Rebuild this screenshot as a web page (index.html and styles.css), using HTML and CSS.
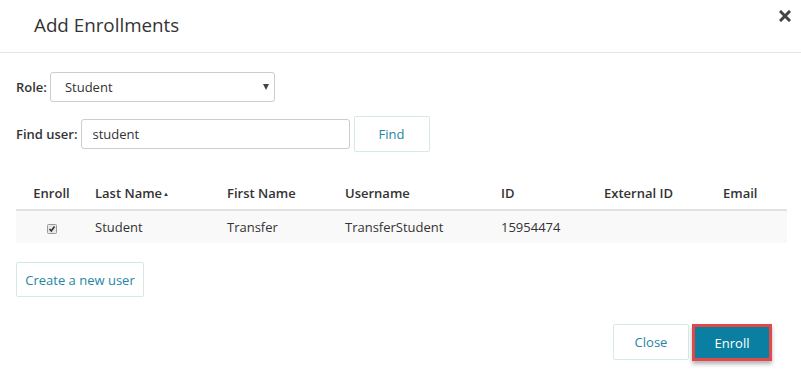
FILE: index.html
```html
<!DOCTYPE html>
<html lang="en">
<head>
  <meta charset="UTF-8">
  <title>Add Enrollments</title>
  <link rel="stylesheet" href="styles.css">
</head>
<body>
  <div class="modal">
    <div class="modal-header">
      <h1>Add Enrollments</h1>
      <button class="close-x" aria-label="Close">
        <svg width="12" height="12" viewBox="0 0 12 12"><path d="M2 2 L10 10 M10 2 L2 10" stroke="#444" stroke-width="3" stroke-linecap="square"/></svg>
      </button>
    </div>

    <div class="modal-body">
      <div class="field">
        <label>Role:</label>
        <div class="select-wrap">
          <select class="role-select">
            <option>Student</option>
          </select>
        </div>
      </div>

      <div class="field">
        <label>Find user:</label>
        <input class="find-input" type="text" value="student">
        <button class="btn find-btn">Find</button>
      </div>

      <table class="users">
        <thead>
          <tr>
            <th class="col-enroll">Enroll</th>
            <th class="col-last">Last Name<span class="sort">&#9650;</span></th>
            <th class="col-first">First Name</th>
            <th class="col-user">Username</th>
            <th class="col-id">ID</th>
            <th class="col-ext">External ID</th>
            <th class="col-email">Email</th>
          </tr>
        </thead>
        <tbody>
          <tr>
            <td class="col-enroll">
              <span class="check">
                <svg width="10" height="10" viewBox="0 0 10 10"><rect x="0.5" y="0.5" width="9" height="9" rx="1" fill="#e8e8e8" stroke="#9a9a9a"/><path d="M2.5 5 L4.3 7 L7.5 2.5" fill="none" stroke="#333" stroke-width="1.6"/></svg>
              </span>
            </td>
            <td>Student</td>
            <td>Transfer</td>
            <td>TransferStudent</td>
            <td>15954474</td>
            <td></td>
            <td></td>
          </tr>
        </tbody>
      </table>

      <button class="btn create-btn">Create a new user</button>
    </div>

    <div class="modal-footer">
      <button class="btn">Close</button>
      <button class="btn btn-primary">Enroll</button>
    </div>
  </div>
</body>
</html>
```

FILE: styles.css
```css
body {
  margin: 0;
  background: #fff;
  font-family: "Open Sans", Arial, sans-serif;
  font-size: 13px;
  color: #333;
}
.modal {
  width: 801px;
  height: 381px;
}
.modal-header {
  height: 52px;
  border-bottom: 1px solid #e5e5e5;
  display: flex;
  justify-content: space-between;
  align-items: flex-start;
  padding: 0 10px 0 34px;
}
.modal-header h1 {
  margin: 12px 0 0;
  font-size: 18.8px;
  font-weight: 400;
  color: #333;
}
.close-x {
  background: none;
  border: none;
  padding: 0;
  margin-top: 10px;
  cursor: pointer;
}
.modal-body {
  padding: 19px 15px 0 16px;
}
.field {
  display: flex;
  align-items: center;
  margin-bottom: 14px;
}
.field label {
  font-weight: 600;
  margin-right: 3px;
}
.select-wrap {
  position: relative;
}
.select-wrap::after {
  content: "";
  position: absolute;
  right: 6px;
  top: 12px;
  border-left: 3px solid transparent;
  border-right: 3px solid transparent;
  border-top: 6px solid #444;
}
.role-select {
  appearance: none;
  width: 225px;
  height: 30px;
  border: 1px solid #ccc;
  border-radius: 3px;
  background: #fff;
  padding: 0 14px;
  font-family: inherit;
  font-size: 13px;
  color: #333;
}
.find-input {
  width: 269px;
  height: 30px;
  box-sizing: border-box;
  border: 1px solid #ccc;
  border-radius: 3px;
  padding: 0 11px;
  font-family: inherit;
  font-size: 13px;
  color: #333;
}
.btn {
  background: #fff;
  border: 1px solid #d3eae8;
  border-radius: 2px;
  color: #2585a6;
  font-family: inherit;
  font-size: 13px;
  height: 36px;
  padding: 0 11px;
  cursor: pointer;
}
.find-btn {
  width: 76px;
  margin-left: 4px;
}
.users {
  width: 771px;
  border-collapse: collapse;
  margin-top: 24px;
}
.users th {
  text-align: left;
  font-weight: 600;
  height: 33px;
  padding: 0 8px;
  border-bottom: 2px solid #e2e2e2;
}
.users td {
  height: 32px;
  padding: 0 8px;
  background: #f9f9f9;
}
.users .col-enroll {
  width: 55px;
  text-align: center;
}
.col-last { width: 116px; }
.col-first { width: 102px; }
.col-user { width: 140px; }
.col-id { width: 87px; }
.col-ext { width: 103px; }
.sort {
  font-size: 6px;
  vertical-align: middle;
  margin-left: 1px;
}
.check {
  display: inline-block;
  vertical-align: middle;
  line-height: 0;
}
.create-btn {
  margin-top: 19px;
  height: 35px;
  width: 128px;
  padding: 0;
}
.modal-footer {
  display: flex;
  justify-content: flex-end;
  gap: 3px;
  padding: 27px 29px 0 0;
}
.modal-footer .btn {
  width: 76px;
}
.modal-footer .btn-primary {
  width: 80px;
  height: 37px;
  background: #0a7fa1;
  color: #fff;
  border: 3px solid #e0484a;
  border-radius: 0;
  box-shadow: 0 3px 4px rgba(0, 0, 0, 0.3);
}
```
